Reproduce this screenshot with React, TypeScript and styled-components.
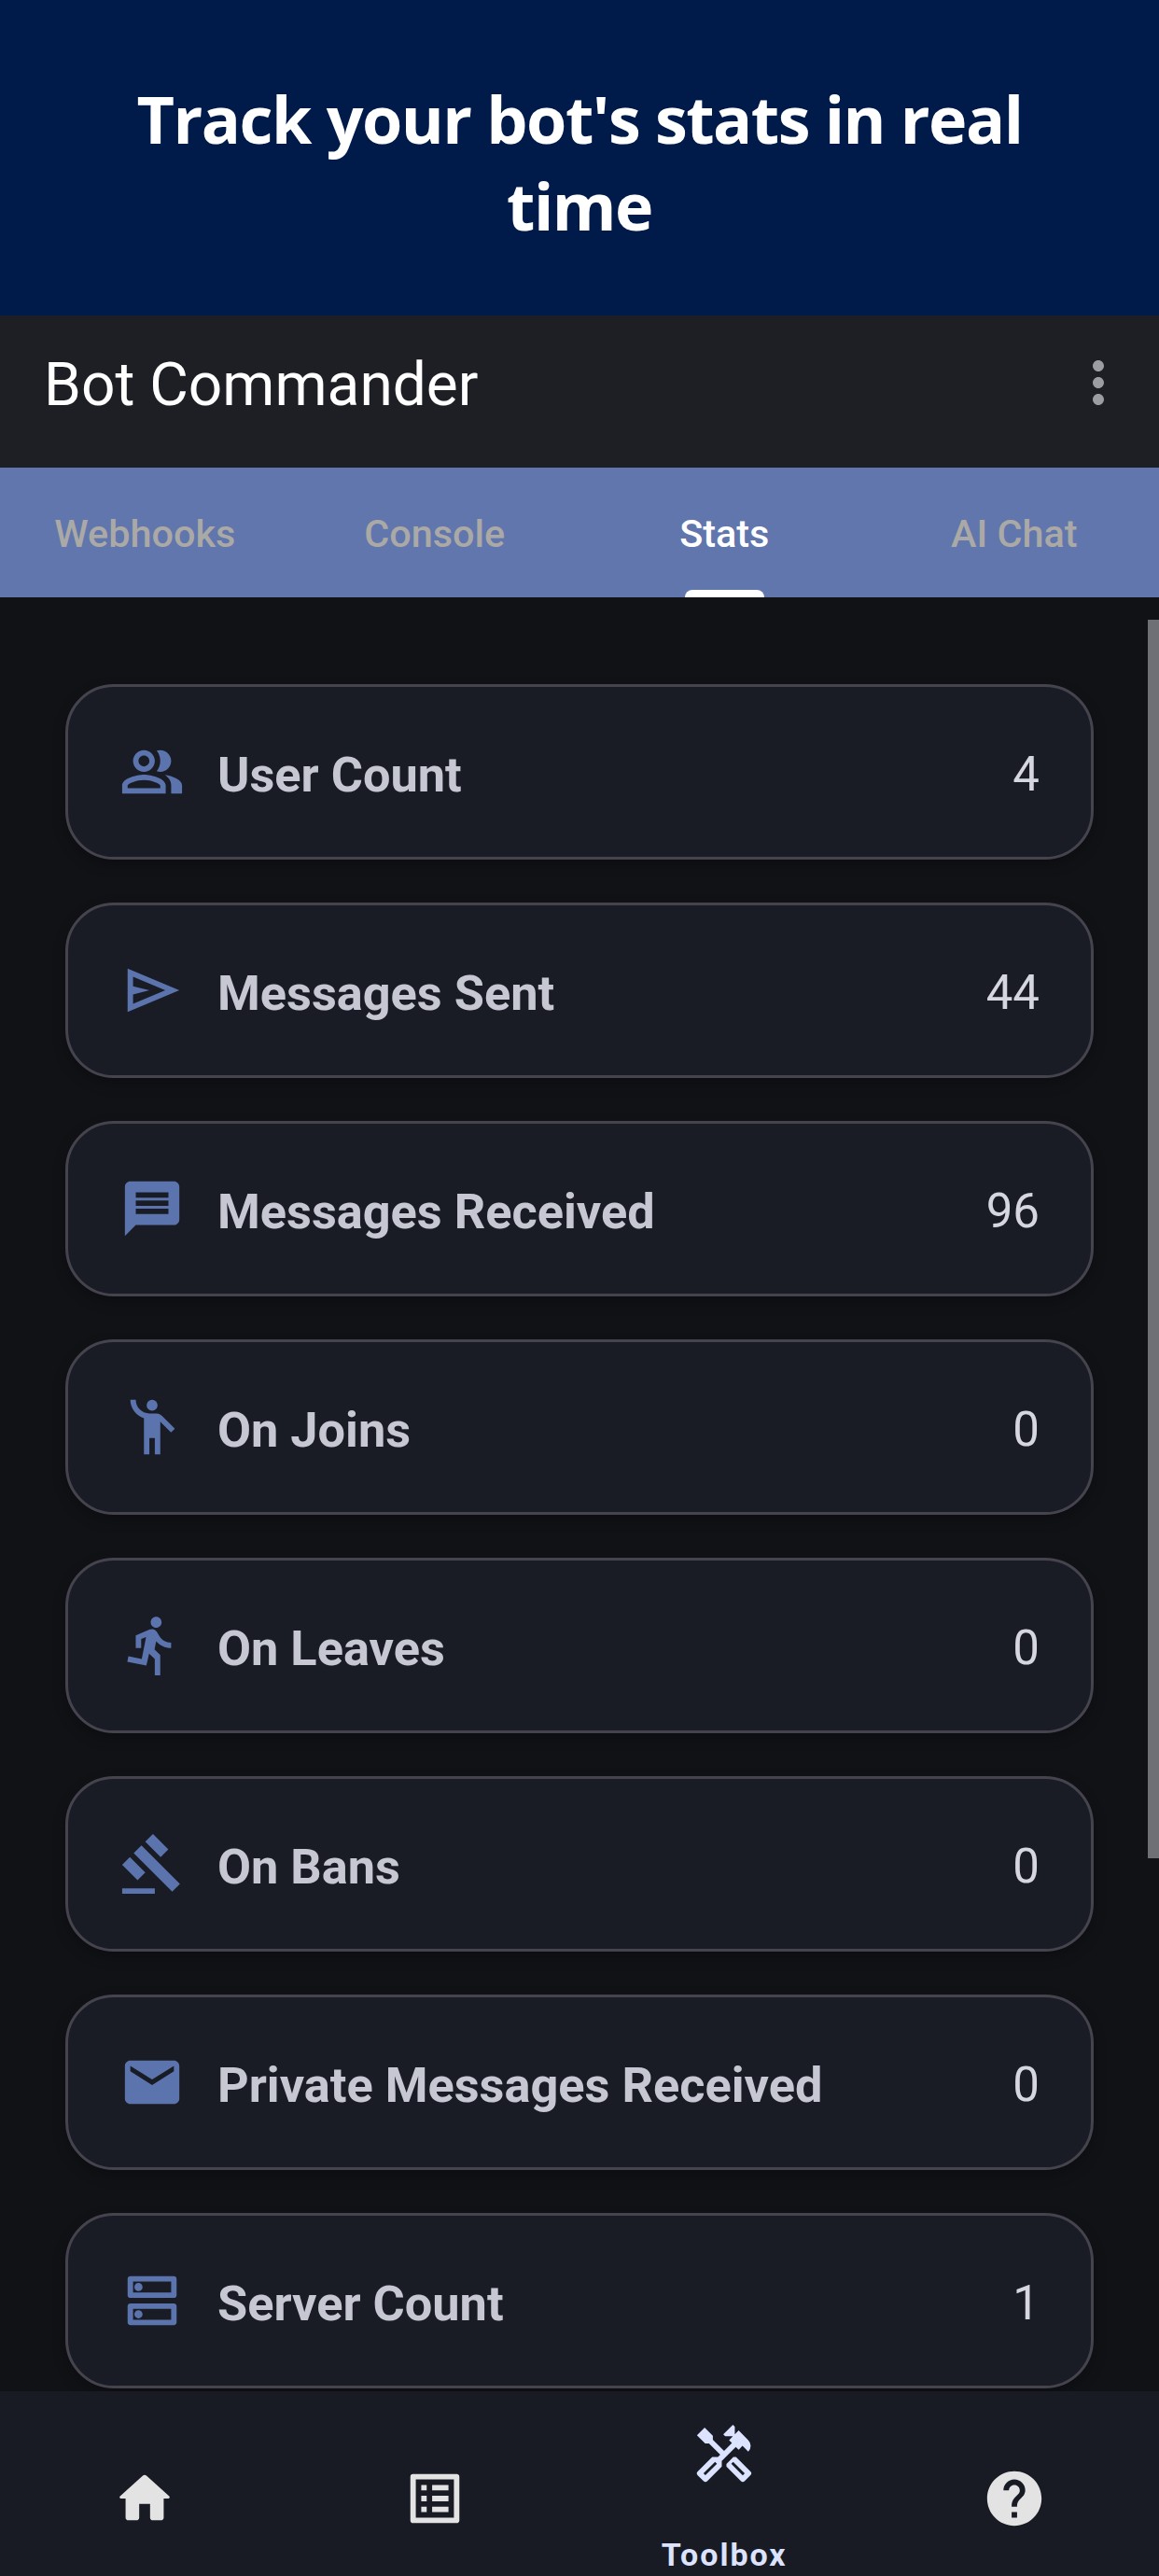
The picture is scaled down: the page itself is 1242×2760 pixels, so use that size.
import styled, { createGlobalStyle } from 'styled-components';
import {
  MdDirectionsRun,
  MdEmail,
  MdEmojiPeople,
  MdGavel,
  MdHelp,
  MdMessage,
  MdMoreVert,
  MdOutlineDns,
  MdOutlineHandyman,
  MdOutlineListAlt,
  MdOutlinePeopleAlt,
} from 'react-icons/md';

const GlobalStyle = createGlobalStyle`
  html, body {
    margin: 0;
    padding: 0;
    background: #111216;
  }
  * {
    box-sizing: border-box;
  }
`;

// these two are the rounded / symbols cuts, the md set only has the sharp ones
const SendIcon = ({ size }: { size: number }) => (
  <svg width={size} height={size} viewBox="0 0 24 24" fill="currentColor">
    <path d="M3 20V4l19 8-19 8Zm2-3 11.85-5L5 7v3.5l6 1.5-6 1.5V17Z" />
  </svg>
);

const HomeIcon = ({ size }: { size: number }) => (
  <svg width={size} height={size} viewBox="0 0 24 24" fill="currentColor">
    <path d="M10 19v-5h4v5c0 .55.45 1 1 1h3c.55 0 1-.45 1-1v-7h1.7c.46 0 .68-.57.33-.87L12.67 3.6c-.38-.34-.96-.34-1.34 0l-8.36 7.53c-.34.3-.13.87.33.87H5v7c0 .55.45 1 1 1h3c.55 0 1-.45 1-1z" />
  </svg>
);

const TABS = ['Webhooks', 'Console', 'Stats', 'AI Chat'];

const STATS = [
  { label: 'User Count', value: 4, Icon: MdOutlinePeopleAlt },
  { label: 'Messages Sent', value: 44, Icon: SendIcon },
  { label: 'Messages Received', value: 96, Icon: MdMessage },
  { label: 'On Joins', value: 0, Icon: MdEmojiPeople },
  { label: 'On Leaves', value: 0, Icon: MdDirectionsRun },
  { label: 'On Bans', value: 0, Icon: MdGavel },
  { label: 'Private Messages Received', value: 0, Icon: MdEmail },
  { label: 'Server Count', value: 1, Icon: MdOutlineDns },
];

const App = () => {
  return (
    <Screen>
      <GlobalStyle />
      <Banner>
        <BannerTitle>Track your bot's stats in real time</BannerTitle>
      </Banner>
      <AppBar>
        <AppTitle>Bot Commander</AppTitle>
        <MenuButton>
          <MdMoreVert size={72} />
        </MenuButton>
      </AppBar>
      <TabBar>
        {TABS.map((tab) => (
          <Tab key={tab} $active={tab === 'Stats'}>
            {tab}
            {tab === 'Stats' && <TabIndicator />}
          </Tab>
        ))}
      </TabBar>
      <Content>
        <ScrollThumb />
        {STATS.map(({ label, value, Icon }) => (
          <StatCard key={label}>
            <StatIcon>
              <Icon size={70} />
            </StatIcon>
            <StatLabel>{label}</StatLabel>
            <StatValue>{value}</StatValue>
          </StatCard>
        ))}
      </Content>
      <BottomNav>
        <NavItem>
          <HomeIcon size={70} />
        </NavItem>
        <NavItem>
          <MdOutlineListAlt size={70} />
        </NavItem>
        <NavItem $active>
          <MdOutlineHandyman size={70} />
          <NavLabel>Toolbox</NavLabel>
        </NavItem>
        <NavItem>
          <MdHelp size={70} />
        </NavItem>
      </BottomNav>
    </Screen>
  );
};

const Screen = styled.div`
  width: 1242px;
  height: 2760px;
  display: flex;
  flex-direction: column;
  overflow: hidden;
  background: #111216;
  font-family: Roboto, sans-serif;
`;
const Banner = styled.div`
  height: 338px;
  flex: none;
  display: flex;
  align-items: center;
  justify-content: center;
  padding: 10px 120px 0;
  background: #001a4a;
`;
const BannerTitle = styled.h1`
  margin: 0;
  font-family: 'Open Sans', sans-serif;
  font-size: 70px;
  line-height: 93px;
  letter-spacing: -1.5px;
  font-weight: 700;
  color: #fff;
  text-align: center;
`;
const AppBar = styled.div`
  height: 163px;
  flex: none;
  display: flex;
  align-items: center;
  justify-content: space-between;
  padding: 0 29px 14px 47px;
  background: #1d1f24;
`;
const AppTitle = styled.div`
  font-size: 64px;
  font-weight: 400;
  color: #fff;
`;
const MenuButton = styled.div`
  display: flex;
  margin-bottom: 5px;
  color: #9c9da3;
`;
const TabBar = styled.div`
  height: 139px;
  flex: none;
  display: grid;
  grid-template-columns: repeat(4, 1fr);
  padding-top: 2px;
  background: #6176ad;
`;
const Tab = styled.div<{ $active?: boolean }>`
  position: relative;
  display: flex;
  align-items: center;
  justify-content: center;
  font-size: 41.4px;
  font-weight: 500;
  color: ${({ $active }) => ($active ? '#fff' : '#aaa9a6')};
`;
const TabIndicator = styled.span`
  position: absolute;
  bottom: 0;
  left: 50%;
  width: 85px;
  height: 8px;
  margin-left: -42px;
  border-radius: 8px 8px 0 0;
  background: #fff;
`;
const Content = styled.div`
  position: relative;
  flex: 1;
  min-height: 0;
  display: flex;
  flex-direction: column;
  gap: 46px;
  padding: 93px 70px 0;
  overflow: hidden;
`;
const ScrollThumb = styled.div`
  position: absolute;
  top: 24px;
  right: 0;
  width: 12px;
  height: 1327px;
  background: #6f7076;
`;
const StatCard = styled.div`
  height: 188px;
  flex: none;
  display: flex;
  align-items: center;
  padding: 0 55px 0 55px;
  border: 3px solid #45434e;
  border-radius: 52px;
  background: #1a1c25;
  box-shadow: 0 6px 14px rgba(0, 0, 0, 0.25);
`;
const StatIcon = styled.div`
  display: flex;
  flex: none;
  margin-right: 35px;
  color: #5c74ad;
`;
const StatLabel = styled.div`
  flex: 1;
  padding-top: 5px;
  font-size: 52.3px;
  font-weight: 700;
  color: #c6c7d2;
`;
const StatValue = styled.div`
  padding-top: 5px;
  font-size: 51px;
  font-weight: 400;
  color: #d5d6e0;
`;
const BottomNav = styled.div`
  height: 198px;
  flex: none;
  display: grid;
  grid-template-columns: repeat(4, 1fr);
  background: #181b24;
`;
const NavItem = styled.div<{ $active?: boolean }>`
  display: flex;
  flex-direction: column;
  align-items: center;
  padding-top: ${({ $active }) => ($active ? '33px' : '80px')};
  color: ${({ $active }) => ($active ? '#dce3ff' : '#e3e3e3')};
`;
const NavLabel = styled.div`
  margin-top: 52px;
  font-size: 34px;
  line-height: 40px;
  font-weight: 700;
  letter-spacing: 2px;
`;

export default App;
